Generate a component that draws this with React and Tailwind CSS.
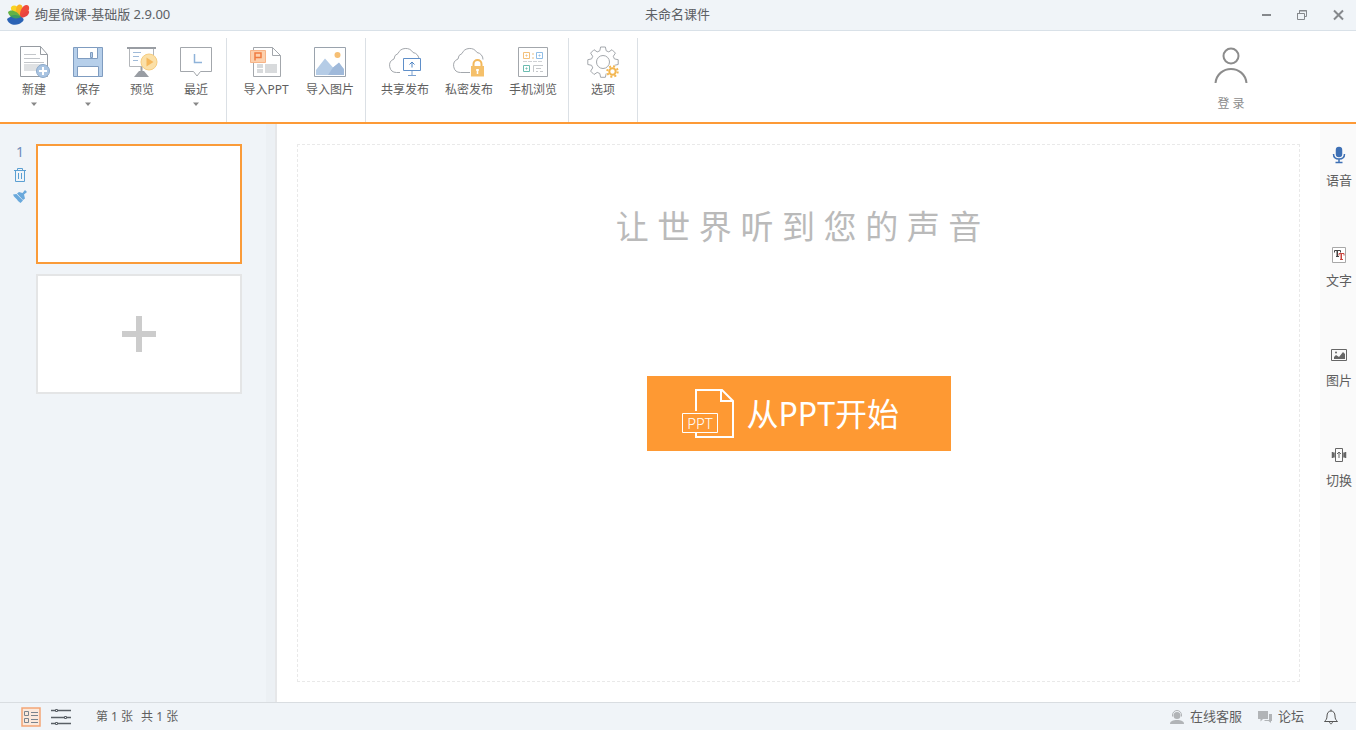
const NewIcon = () => (
  <svg width="32" height="32" viewBox="0 0 32 32" fill="none" stroke="#969ba1">
    <path d="M22.5.5h-20v30h27V8.5z" fill="#fff" />
    <path d="M22.5.5v8h7" />
    <path d="M6 8.5h12M6 12.5h16M6 16.5h20" stroke="#c3c6ca" />
    <path d="M6 18h20v7H6z" fill="#dfe1e3" stroke="none" />
    <circle cx="25" cy="25" r="6.5" fill="#a9c4e2" stroke="#8aa8ca" />
    <path d="M25 21v8M21 25h8" stroke="#fff" strokeWidth="2" />
  </svg>
);

const SaveIcon = () => (
  <svg width="32" height="32" viewBox="0 0 32 32" stroke="#7f9cc0">
    <path d="M1.5 1.5h29v29h-29z" fill="#b6cfea" />
    <path d="M5.5 1.5h20v11h-20zM5.5 20.5h21v10h-21z" fill="#fff" />
    <path d="M18.5 6.5h2v5h-2z" fill="#b6cfea" />
  </svg>
);

const PreviewIcon = () => (
  <svg width="32" height="32" viewBox="0 0 32 32" fill="none">
    <path d="M3.5 2v18.5h24V2" fill="#fff" stroke="#b3b6ba" />
    <path d="M1 2h29" stroke="#999da3" strokeWidth="2" />
    <path d="M7 6.5h8M7 10.5h6M7 14.5h5" stroke="#9fbad8" />
    <path d="M15.5 21v4" stroke="#999da3" strokeWidth="2" />
    <path d="M8 31l5-6h5l5 6z" fill="#999da3" />
    <circle cx="23" cy="16" r="8" fill="#fbe0a8" stroke="#f6cd80" />
    <path d="M20.5 11.5v9l7-4.5z" fill="#f6b85c" />
  </svg>
);

const RecentIcon = () => (
  <svg width="32" height="32" viewBox="0 0 32 32" fill="none">
    <path d="M.5 1.5h31v24h-11L17 30l-3.500-4.500H.5z" fill="#fff" stroke="#a3a7ac" />
    <path d="M14.5 8v8.500H22" stroke="#8fb3d9" strokeWidth="1.5" />
  </svg>
);

const ImportPptIcon = () => (
  <svg width="32" height="32" viewBox="0 0 32 32" fill="none">
    <path d="M22.5 1.5h-19v29h27v-21z" fill="#fff" stroke="#a3a7ac" />
    <path d="M22.5 1.5v8h8" stroke="#a3a7ac" />
    <path d="M7 18h6v4H7zM7 23h6v4H7zM15 18h12v9H15z" fill="#d8dadc" />
    <path d="M.5 4.5h15v12H.5z" fill="#fcd0ad" stroke="#f7b488" />
    <path d="M5 14.500V7h6v4.500H5" stroke="#f07b40" strokeWidth="1.5" />
  </svg>
);

const ImportImageIcon = () => (
  <svg width="32" height="32" viewBox="0 0 32 32" fill="none">
    <path d="M.5 1.5h31v29H.5z" fill="#fff" stroke="#9aa3ad" />
    <circle cx="23.5" cy="9" r="3" fill="#f6bf74" />
    <path d="M2 24l9-11.500 8 9 6-4.500 5 6v6H2z" fill="#b5cce6" />
    <path d="M14 29l5-7.500 6-5 5 7V29z" fill="#9fb9da" />
  </svg>
);

const CLOUD = "M11 26.500H7.500A7 7 0 0 1 5 13a6 6 0 0 1 4-5.500A8.500 8.500 0 0 1 24 6.500a7 7 0 0 1 6 7";

const ShareIcon = () => (
  <svg width="32" height="32" viewBox="0 0 32 32" fill="none">
    <path d={CLOUD} stroke="#a3a7ac" />
    <path d="M14.5 12.5h17v12h-17z" fill="#fff" stroke="#5f8fc9" />
    <path d="M23 21.500V16M20.500 18.500L23 16l2.500 2.500" stroke="#4f84c4" />
    <path d="M23 25v4M19 29.500h8" stroke="#7ba1d0" />
  </svg>
);

const PrivateIcon = () => (
  <svg width="32" height="32" viewBox="0 0 32 32" fill="none">
    <path d={`${CLOUD}M11 26.500h6`} stroke="#a3a7ac" />
    <path d="M20.5 21v-3a4 4 0 0 1 8 0v3" stroke="#f3b85b" strokeWidth="2" />
    <path d="M18 20h13v10.500H18z" fill="#f5c06a" />
    <path d="M24.500 23v5M23 24h3" stroke="#fff" strokeWidth="1.5" />
  </svg>
);

const MobileIcon = () => (
  <svg width="32" height="32" viewBox="0 0 32 32" fill="none">
    <path d="M1.5 1.5h29v29h-29z" fill="#fff" stroke="#a3a7ac" />
    <path d="M6.5 6.5h6v6h-6zM9 9h1v1H9z" stroke="#f3c07a" />
    <path d="M19.5 6.5h6v6h-6zM22 9h1v1h-1z" stroke="#8fbde6" />
    <path d="M6.5 19.5h6v6h-6zM9 22h1v1H9z" stroke="#6cbcb0" />
    <path d="M16 7v2M16 11v2" stroke="#e5c08a" />
    <path d="M6 15.5h20" stroke="#cfd1d4" strokeDasharray="4 1" />
    <path d="M16.5 26v-6.500H26M19 22.5h5M19 25.5h2M23 25.5h3" stroke="#c5c8cb" />
  </svg>
);

const GEAR =
  "M13.600 1h4.800l.8 3.800 2.600 1.100L25 3.700l3.400 3.400-2.100 3.200 1.100 2.600 3.800.8v4.800l-3.800.8-1.100 2.600 2.100 3.200-3.400 3.400-3.200-2.100-2.600 1.100-.8 3.800h-4.800l-.8-3.800-2.600-1.100L7 28.500l-3.400-3.400 2.100-3.200-1.100-2.600-3.800-.8v-4.800l3.800-.8 1.100-2.600-2.100-3.200L7 3.700l3.200 2.200 2.600-1.100z";

const OptionsIcon = () => (
  <svg width="32" height="32" viewBox="0 0 32 32" fill="none" strokeLinejoin="round">
    <path d={GEAR} stroke="#a3a7ac" />
    <circle cx="16" cy="16" r="6.5" stroke="#a3a7ac" />
    <circle cx="25.5" cy="25.5" r="6.5" fill="#fff" />
    <circle cx="25.5" cy="25.5" r="3.2" stroke="#f3b64f" strokeWidth="2" />
    <circle cx="25.5" cy="25.5" r="5.2" stroke="#f3b64f" strokeWidth="2" strokeDasharray="2 2.08" />
  </svg>
);

const Logo = () => (
  <svg width="24" height="22" viewBox="0 0 24 22">
    <path d="M13 12C9 11 3 7 4 3.500 5 0 11 1 13 6z" fill="#f9d423" />
    <path d="M12 12C8 9 8 2 12 .5 16 0 17 5 14 12z" fill="#fbb324" />
    <path d="M13 14C12 8 15 2 19 1c4-.5 4 5 1 8-2 2-4 4-7 5z" fill="#ef4a3b" />
    <path d="M13 14c2-4 5-7 9-7 1 3-3 7-9 7z" fill="#e8433f" />
    <path d="M1 8c2-3 9-2 13 5-4 3-12 1-13-5z" fill="#63b246" />
    <path d="M0 15c3-3 9-4 14-2 5 2 2 5-2 7-5 2-11 0-12-5z" fill="#2b63b5" />
    <path d="M3 12c4-2 9-1 11 1-3 2-8 2-11-1z" fill="#3f9a62" />
  </svg>
);

const GROUPS = [
  {
    pad: "pl-[7px] pr-[3px]",
    items: [
      { label: "新建", Icon: NewIcon, caret: true, width: "w-[54px]" },
      { label: "保存", Icon: SaveIcon, caret: true, width: "w-[54px]" },
      { label: "预览", Icon: PreviewIcon, width: "w-[54px]" },
      { label: "最近", Icon: RecentIcon, caret: true, width: "w-[54px]" },
    ],
  },
  {
    pad: "pl-[7px] pr-[3px]",
    items: [
      { label: "导入PPT", Icon: ImportPptIcon, width: "w-16" },
      { label: "导入图片", Icon: ImportImageIcon, width: "w-16" },
    ],
  },
  {
    pad: "pl-[7px] pr-[3px]",
    items: [
      { label: "共享发布", Icon: ShareIcon, width: "w-16" },
      { label: "私密发布", Icon: PrivateIcon, width: "w-16" },
      { label: "手机浏览", Icon: MobileIcon, width: "w-16" },
    ],
  },
  {
    pad: "px-[7px]",
    items: [{ label: "选项", Icon: OptionsIcon, width: "w-[54px]" }],
  },
];

function TitleBar() {
  return (
    <header className="flex h-[31px] shrink-0 items-center border-b border-[#d9e1e8] bg-[#f0f4f8] text-[13px] text-[#5c6064]">
      <div className="flex flex-1 items-center gap-1 pl-[7px]">
        <Logo />
        <span className="whitespace-nowrap">绚星微课-基础版 2.9.00</span>
      </div>
      <h1 className="pr-2">未命名课件</h1>
      <div className="flex flex-1 justify-end text-[#85888c]">
        <button aria-label="最小化" className="flex h-[30px] w-9 items-center justify-center">
          <svg width="12" height="12" viewBox="0 0 12 12" stroke="currentColor" strokeWidth="2">
            <path d="M2 6h9" />
          </svg>
        </button>
        <button aria-label="还原" className="flex h-[30px] w-9 items-center justify-center">
          <svg width="12" height="12" viewBox="0 0 12 12" fill="none" stroke="currentColor">
            <path d="M1 4.500h7.500v6H1.500v-6M3.500 4V1.500h7v6H9M3 2h8" />
          </svg>
        </button>
        <button aria-label="关闭" className="flex h-[30px] w-9 items-center justify-center">
          <svg width="12" height="12" viewBox="0 0 12 12" stroke="currentColor" strokeWidth="2">
            <path d="M2 1.500l9 9M11 1.500l-9 9" />
          </svg>
        </button>
      </div>
    </header>
  );
}

function ToolButton({ label, Icon, caret, width }) {
  return (
    <button className={`flex flex-col items-center ${width}`}>
      <Icon />
      <span className="mt-0.5 whitespace-nowrap text-xs leading-5">{label}</span>
      {caret && (
        <svg className="mt-0.5" width="6" height="4" viewBox="0 0 6 4" fill="#888">
          <path d="M0 .5h6L3 4z" />
        </svg>
      )}
    </button>
  );
}

function Toolbar() {
  return (
    <div className="flex h-[93px] shrink-0 border-b-2 border-[#fd9a36] bg-white pt-[7px] text-[#5f5f5f]">
      {GROUPS.map((group, i) => (
        <div key={i} className={`flex items-start border-r border-[#dbe0e5] pt-2 ${group.pad}`}>
          {group.items.map((item) => (
            <ToolButton key={item.label} {...item} />
          ))}
        </div>
      ))}
      <button className="ml-auto mr-[101px] flex w-12 flex-col items-center self-start pt-2 text-[#8c8c8c]">
        <svg width="34" height="38" viewBox="0 0 34 38" fill="none" stroke="#8c8c8c" strokeWidth="2">
          <circle cx="17" cy="10" r="7.5" />
          <path d="M1.500 37c1-9 8-14 15.500-14s14.500 5 15.500 14" />
        </svg>
        <span className="mt-2.5 whitespace-nowrap text-xs leading-5">登 录</span>
      </button>
    </div>
  );
}

function SlideList() {
  return (
    <aside className="flex w-[277px] shrink-0 border-r-2 border-[#e6e7e9] bg-[#f0f4f8]">
      <ol className="flex flex-1 flex-col gap-2.5 pt-5">
        <li className="flex">
          <div className="flex w-9 flex-col items-center gap-2 pl-1 text-[#5a9fd2]">
            <span className="text-sm leading-4 text-[#6f8cbb]">1</span>
            <button aria-label="删除">
              <svg width="14" height="14" viewBox="0 0 14 14" fill="none" stroke="currentColor">
                <path d="M1 2.500h12M4.500 2V.5h5V2M2.500 3v10.500h9V3M5.500 5v6M8.500 5v6" />
              </svg>
            </button>
            <button aria-label="清除">
              <svg width="14" height="14" viewBox="0 0 14 14" fill="#6aa9dc">
                <path d="M12 0l2 2-3 2.500 1 4L10 10 4 3.500 6 2l3.500 1z" />
                <path d="M3.500 4l6.500 6.500L7.500 13 5 11 4 9.500 2.500 8 1 6.500 0 4.500z" />
              </svg>
            </button>
          </div>
          <button aria-label="第 1 张" className="h-[120px] w-[206px] border-2 border-[#fa9b39] bg-white" />
        </li>
        <li className="pl-9">
          <button
            aria-label="添加页面"
            className="flex h-[120px] w-[206px] items-center justify-center border-2 border-[#e4e5e6] bg-white"
          >
            <svg width="34" height="36" viewBox="0 0 34 36" fill="#ccc">
              <path d="M14 0h6v36h-6zM0 15h34v6H0z" />
            </svg>
          </button>
        </li>
      </ol>
      <div className="w-[9px] bg-[#ecf0f4]" />
    </aside>
  );
}

function Stage() {
  return (
    <main className="flex min-w-0 flex-1 bg-white p-5">
      <div className="flex flex-1 flex-col items-center border border-dashed border-[#e9e9e9] pt-[57px]">
        <p className="whitespace-nowrap text-[33px] leading-[50px] text-[#bababa]">让 世 界 听 到 您 的 声 音</p>
        <button className="mt-[124px] flex h-[75px] w-[304px] items-center bg-[#fe9933] pl-[35px] text-white">
          <svg width="53" height="52" viewBox="0 0 53 52" fill="none" stroke="#fff" strokeWidth="2">
            <path d="M14 23V2h26l11 11v36H14v-4" />
            <path d="M39 2v11h12" />
            <path d="M.5 25.500h35v19H.5z" strokeWidth="1" />
            <text x="18" y="41" textAnchor="middle" fontSize="15" fontWeight="300" fill="#fff" stroke="none">
              PPT
            </text>
          </svg>
          <span className="ml-3 whitespace-nowrap text-[32px] leading-[50px]">从PPT开始</span>
        </button>
      </div>
    </main>
  );
}

const INSERTS = [
  {
    label: "语音",
    icon: (
      <svg width="16" height="18" viewBox="0 0 16 18" fill="none" stroke="#3e70b5" strokeWidth="1.5">
        <rect x="5.5" y="1.5" width="5" height="9" rx="2.5" fill="#3e70b5" />
        <path d="M2.500 8c0 3 2 5 5.500 5s5.500-2 5.500-5M8 13v3M4.500 16.500h7" />
      </svg>
    ),
  },
  {
    label: "文字",
    icon: (
      <svg width="16" height="18" viewBox="0 0 16 18" fill="none">
        <path d="M1.5 1.5h13v15h-13z" fill="#fff" stroke="#a8a8a8" />
        <path d="M3.500 6.500v-2h6v2M6.500 4v6.500M5 10.500h3" stroke="#444" />
        <path d="M6 4v6.500" stroke="#444" />
        <path d="M8 9.500v-2h5v2M10.500 7v6.500M9 13.500h3" stroke="#c8453f" />
        <path d="M10 8v5" stroke="#c8453f" />
      </svg>
    ),
  },
  {
    label: "图片",
    icon: (
      <svg width="16" height="18" viewBox="0 0 16 18" fill="none">
        <path d="M.5 3.500h15v11H.5z" stroke="#666" />
        <path d="M3 13v-2l2-2 3 2 4-5 2 2v5z" fill="#666" />
        <circle cx="5" cy="6.500" r="1" fill="#666" />
      </svg>
    ),
  },
  {
    label: "切换",
    icon: (
      <svg width="16" height="18" viewBox="0 0 16 18" fill="none" stroke="#666">
        <path d="M4.500 2.500h7v13h-7z" />
        <path d="M8 12V6M6 8l2-2 2 2" />
        <path d="M1.500 6v6M14.500 6v6M3 6.500v5M13 6.500v5" strokeWidth="1.5" />
      </svg>
    ),
  },
];

function InsertPanel() {
  return (
    <nav className="flex w-9 shrink-0 flex-col items-center gap-14 bg-[#fafafa] pl-0.5 pt-[22px] text-[#5f5f5f]">
      {INSERTS.map(({ label, icon }) => (
        <button key={label} className="flex flex-col items-center gap-1.5">
          {icon}
          <span className="whitespace-nowrap text-[13px] leading-5">{label}</span>
        </button>
      ))}
    </nav>
  );
}

function StatusBar() {
  return (
    <footer className="flex h-7 shrink-0 items-center border-t border-[#d9dde1] bg-[#f0f4f8] pl-[21px] pr-[18px] text-[13px] text-[#5f5f5f]">
      <button aria-label="缩略图">
        <svg width="20" height="20" viewBox="0 0 20 20" fill="none" stroke="#7a848e">
          <path d="M1 1h18v18H1z" fill="#fbe9dc" stroke="#f3a575" strokeWidth="1.5" />
          <path d="M3.500 4.500h4v4h-4zM3.500 11.500h4v4h-4zM10 5.500h7M10 8.500h7M10 12.500h7M10 15.500h7" />
        </svg>
      </button>
      <button aria-label="时间轴" className="ml-2.5">
        <svg width="20" height="20" viewBox="0 0 20 20" fill="none" stroke="#5a6066">
          <path d="M0 3.500h4M7 3.500h13M0 10.500h13M16 10.500h4M0 16.500h4M7 16.500h13" strokeWidth="1.5" />
          <path d="M4.500 2.500h2v2h-2zM13.500 9.500h2v2h-2zM4.500 15.500h2v2h-2z" />
        </svg>
      </button>
      <p className="ml-[25px] flex gap-2 text-xs">
        <span>第 1 张</span>
        <span>共 1 张</span>
      </p>
      <a href="#service" className="ml-auto flex items-center gap-1.5">
        <svg width="14" height="14" viewBox="0 0 14 14" fill="#b1b4b7">
          <circle cx="7" cy="5.500" r="3.5" />
          <path d="M0 14c0-3 3-4 7-4s7 1 7 4z" />
          <path d="M2.500 6.500V5a4.500 4.500 0 0 1 9 0v1.500" fill="none" stroke="#b1b4b7" />
        </svg>
        在线客服
      </a>
      <a href="#forum" className="ml-4 flex items-center gap-1.5">
        <svg width="14" height="14" viewBox="0 0 14 14" fill="#b1b4b7">
          <path d="M0 1h10v8H5l-2.500 2.500V9H0zM11 4h3v7h-1v2l-2.500-2H6l1-1h4z" />
        </svg>
        论坛
      </a>
      <button aria-label="通知" className="ml-5">
        <svg width="14" height="16" viewBox="0 0 14 16" fill="none" stroke="#555">
          <path d="M7 2C4.500 2 3 4 3 7c0 3-1 4-2.500 5.500h13C12 11 11 10 11 7c0-3-1.500-5-4-5zM7 .5V2M5.500 12.500c0 3 3 3 3 0" />
        </svg>
      </button>
    </footer>
  );
}

export default function App() {
  return (
    <div className="flex h-screen flex-col overflow-hidden font-['Noto_Sans','Noto_Sans_CJK_SC',sans-serif]">
      <TitleBar />
      <Toolbar />
      <div className="flex min-h-0 flex-1">
        <SlideList />
        <Stage />
        <InsertPanel />
      </div>
      <StatusBar />
    </div>
  );
}
